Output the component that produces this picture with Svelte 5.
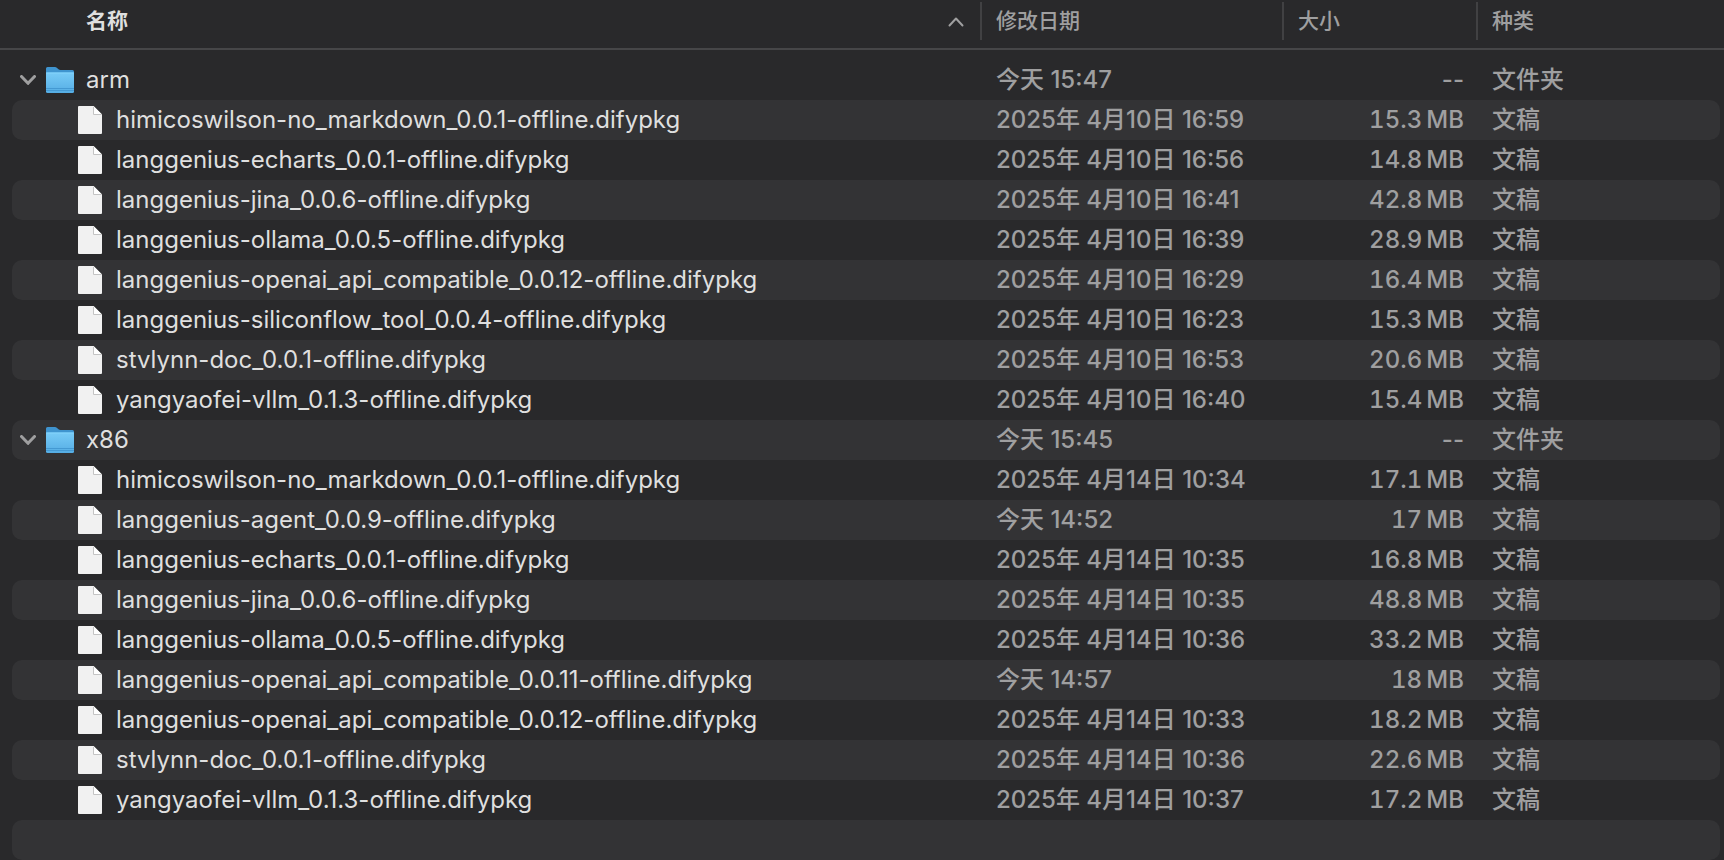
<script lang="ts">
	interface FileEntry {
		name: string;
		date: string;
		size: string;
	}

	interface Folder {
		name: string;
		date: string;
		open: boolean;
		files: FileEntry[];
	}

	let folders: Folder[] = $state([
		{
			name: 'arm',
			date: '今天 15:47',
			open: true,
			files: [
				{ name: 'himicoswilson-no_markdown_0.0.1-offline.difypkg', date: '2025年 4月10日 16:59', size: '15.3 MB' },
				{ name: 'langgenius-echarts_0.0.1-offline.difypkg', date: '2025年 4月10日 16:56', size: '14.8 MB' },
				{ name: 'langgenius-jina_0.0.6-offline.difypkg', date: '2025年 4月10日 16:41', size: '42.8 MB' },
				{ name: 'langgenius-ollama_0.0.5-offline.difypkg', date: '2025年 4月10日 16:39', size: '28.9 MB' },
				{ name: 'langgenius-openai_api_compatible_0.0.12-offline.difypkg', date: '2025年 4月10日 16:29', size: '16.4 MB' },
				{ name: 'langgenius-siliconflow_tool_0.0.4-offline.difypkg', date: '2025年 4月10日 16:23', size: '15.3 MB' },
				{ name: 'stvlynn-doc_0.0.1-offline.difypkg', date: '2025年 4月10日 16:53', size: '20.6 MB' },
				{ name: 'yangyaofei-vllm_0.1.3-offline.difypkg', date: '2025年 4月10日 16:40', size: '15.4 MB' }
			]
		},
		{
			name: 'x86',
			date: '今天 15:45',
			open: true,
			files: [
				{ name: 'himicoswilson-no_markdown_0.0.1-offline.difypkg', date: '2025年 4月14日 10:34', size: '17.1 MB' },
				{ name: 'langgenius-agent_0.0.9-offline.difypkg', date: '今天 14:52', size: '17 MB' },
				{ name: 'langgenius-echarts_0.0.1-offline.difypkg', date: '2025年 4月14日 10:35', size: '16.8 MB' },
				{ name: 'langgenius-jina_0.0.6-offline.difypkg', date: '2025年 4月14日 10:35', size: '48.8 MB' },
				{ name: 'langgenius-ollama_0.0.5-offline.difypkg', date: '2025年 4月14日 10:36', size: '33.2 MB' },
				{ name: 'langgenius-openai_api_compatible_0.0.11-offline.difypkg', date: '今天 14:57', size: '18 MB' },
				{ name: 'langgenius-openai_api_compatible_0.0.12-offline.difypkg', date: '2025年 4月14日 10:33', size: '18.2 MB' },
				{ name: 'stvlynn-doc_0.0.1-offline.difypkg', date: '2025年 4月14日 10:36', size: '22.6 MB' },
				{ name: 'yangyaofei-vllm_0.1.3-offline.difypkg', date: '2025年 4月14日 10:37', size: '17.2 MB' }
			]
		}
	]);

	// number and unit are set with a thin space between them
	const formatSize = (size: string) => size.replace(' ', '\u2009');
</script>

<table>
	<colgroup>
		<col />
		<col class="col-date" />
		<col class="col-size" />
		<col class="col-kind" />
	</colgroup>
	<thead>
		<tr>
			<th class="sorted" aria-sort="ascending">
				<button>
					<span>名称</span>
					<svg width="16" height="10" viewBox="0 0 16 10" aria-hidden="true">
						<path d="M1.5 8.5 8 1.5l6.5 7" />
					</svg>
				</button>
			</th>
			<th><button>修改日期</button></th>
			<th><button>大小</button></th>
			<th><button>种类</button></th>
		</tr>
	</thead>
	<tbody>
		{#each folders as folder}
			<tr>
				<td>
					<div class="name">
						<button class="toggle" aria-label={folder.name} aria-expanded={folder.open} onclick={() => (folder.open = !folder.open)}>
							<svg class:closed={!folder.open} width="16" height="10" viewBox="0 0 16 10">
								<path d="M1.5 1.5 8 8.3l6.5-6.8" />
							</svg>
						</button>
						<svg width="28" height="28" viewBox="0 0 28 28" aria-hidden="true">
							<defs>
								<linearGradient id="front-{folder.name}" x1="0" y1="0" x2="0" y2="1">
									<stop offset="0" stop-color="#78cbf7" />
									<stop offset="1" stop-color="#55ade4" />
								</linearGradient>
							</defs>
							<path d="M0 2.5Q0 1 1.5 1H9q1 0 1.8.7l1.7 1.5q.8.7 2 .7h12q1.5 0 1.5 1.5V12H0z" fill="#3f94cf" />
							<path d="M0 7.5Q0 6.5 1 6.5h26q1 0 1 1v18q0 1.5-1.5 1.5h-25Q0 27 0 25.5z" fill="url(#front-{folder.name})" />
							<path d="M0 7h28" stroke="#83d3fb" />
							<path d="M0 22.5h28M0 24.5h28" stroke="#4499d2" />
						</svg>
						<span>{folder.name}</span>
					</div>
				</td>
				<td>{folder.date}</td>
				<td class="size">--</td>
				<td>文件夹</td>
			</tr>
			{#if folder.open}
				{#each folder.files as file}
					<tr>
						<td>
							<div class="name file">
								<svg width="24" height="28" viewBox="0 0 24 28" aria-hidden="true">
									<path d="M1 0h14.5L24 8.5V27q0 1-1 1H1q-1 0-1-1V1q0-1 1-1z" fill="#f1f1f1" />
									<path d="M15.5 0 24 8.5h-8.5z" fill="#fff" />
									<path d="M15.5 1v7.5h8" fill="none" stroke="#c4c4c4" />
								</svg>
								<span>{file.name}</span>
							</div>
						</td>
						<td>{file.date}</td>
						<td class="size digits">{formatSize(file.size)}</td>
						<td>文稿</td>
					</tr>
				{/each}
			{/if}
		{/each}
		<tr aria-hidden="true">
			<td></td>
			<td></td>
			<td></td>
			<td></td>
		</tr>
	</tbody>
</table>

<style>
	:global(body) {
		background: #29292b;
	}

	table {
		width: 100%;
		table-layout: fixed;
		border-collapse: separate;
		border-spacing: 0;
		font-family: Inter, 'Noto Sans CJK SC', sans-serif;
		font-size: 24px;
		font-weight: 500;
		color: #9f9fa0;
	}

	.col-date {
		width: 302px;
	}

	.col-size {
		width: 194px;
	}

	.col-kind {
		width: 248px;
	}

	th {
		height: 48px;
		padding: 0;
		border-bottom: 2px solid #464648;
	}

	th button {
		display: flex;
		align-items: center;
		justify-content: space-between;
		width: 100%;
		height: 38px;
		margin-bottom: 6px;
		padding: 0 14px 4px;
		border: 0;
		border-left: 2px solid #414143;
		background: none;
		font: inherit;
		font-size: 21px;
		font-weight: 500;
		color: #9f9fa0;
	}

	th.sorted button {
		padding: 0 16px 4px 86px;
		border-left: 0;
		font-weight: 700;
		color: #dfdfdf;
	}

	th svg {
		margin-top: 6px;
	}

	svg {
		flex: none;
	}

	button svg {
		fill: none;
		stroke: #9f9fa0;
		stroke-width: 2;
		stroke-linecap: round;
		stroke-linejoin: round;
	}

	tbody::before {
		content: '';
		display: block;
		height: 10px;
	}

	td {
		height: 40px;
		padding: 0 0 0 16px;
		line-height: 40px;
		white-space: nowrap;
		background-clip: padding-box;
	}

	/* the stripe stops short of both window edges */
	td:first-child {
		padding: 0;
		border-left: 12px solid transparent;
		border-radius: 22px 0 0 22px / 10px 0 0 10px;
	}

	td:last-child {
		border-right: 4px solid transparent;
		border-radius: 0 14px 14px 0 / 0 10px 10px 0;
	}

	tr:nth-child(even) td {
		background-color: #333335;
	}

	.size {
		padding: 0 12px 0 0;
		text-align: right;
	}

	.digits {
		font-variant-numeric: tabular-nums;
	}

	.name {
		display: flex;
		align-items: center;
		gap: 12px;
		height: 40px;
		padding-left: 8px;
		font-weight: 400;
		color: #dfdfdf;
	}

	.name.file {
		gap: 14px;
		padding-left: 66px;
	}

	.toggle {
		display: flex;
		margin-right: -2px;
		padding: 0;
		border: 0;
		background: none;
	}

	.toggle svg {
		stroke-width: 3;
	}

	.toggle svg.closed {
		transform: rotate(-90deg);
	}
</style>
